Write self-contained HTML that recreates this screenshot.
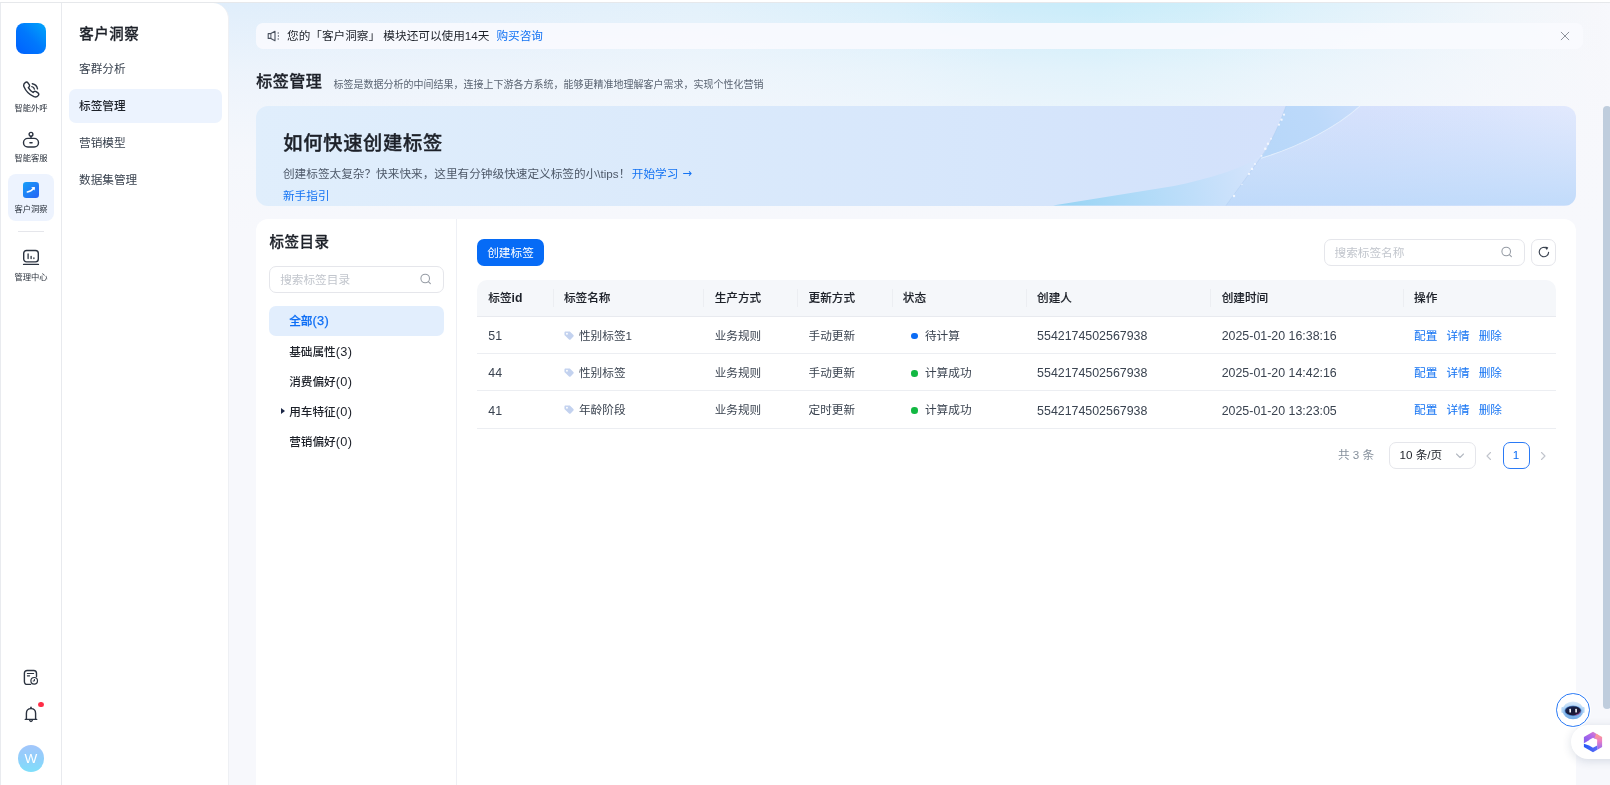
<!DOCTYPE html>
<html lang="zh-CN">
<head>
<meta charset="utf-8">
<title>标签管理</title>
<style>
*{box-sizing:border-box;margin:0;padding:0}
html,body{width:1610px;height:785px;overflow:hidden;background:#fff}
body{font-family:"Liberation Sans","Noto Sans CJK SC",sans-serif;font-size:11.650px;color:#1d2129;position:relative;-webkit-font-smoothing:antialiased}
a{text-decoration:none;color:#1473f3}
.abs{position:absolute}
#topline{position:absolute;left:0;top:2px;width:1610px;height:1px;background:#e6e8eb}
#app{position:absolute;left:0;top:3px;width:1610px;height:782px;overflow:hidden;background:#f7f8fc;will-change:transform}
/* main background */
#mainbg{position:absolute;left:62px;top:0;width:1548px;height:782px;background:#f7f8fc;overflow:hidden}
#mainbg .g1{position:absolute;left:0;top:0;width:100%;height:230px;
 background:linear-gradient(90deg,#dcebfb 0%,#e0eefb 11%,#e1effb 28%,#e3f1fb 41%,#d8effb 54%,#cdecfa 60.600%,#c8ecfa 67%,#cfeefa 73.500%,#dcf1fb 80%,#e6f3fb 86.400%,#f0f6fb 93%,#f6f7fb 99%,#f7f8fc 100%)}
#mainbg .g2{position:absolute;left:0;top:0;width:100%;height:230px;
 background:linear-gradient(180deg,rgba(247,248,252,0) 0%,rgba(247,248,252,.55) 30%,rgba(247,248,252,.9) 65%,#f7f8fc 100%)}
/* icon rail */
#rail{position:absolute;left:0;top:0;width:62px;height:782px;background:#fff;box-shadow:inset 1px 0 0 #e9ebef,inset -1px 0 0 #e8eaee;z-index:3}
#logo{position:absolute;left:16px;top:20.300px;width:30px;height:30.500px;border-radius:8px;background:linear-gradient(45deg,#0060ff 0%,#0078fd 50%,#00a6fa 100%)}
.nav{position:absolute;left:0;width:62px;text-align:center}
.lbl{position:absolute;left:0;width:62px;text-align:center;font-size:8.300px;line-height:10px;color:#2b323d;white-space:nowrap}
.nav svg{position:absolute}
#navact{position:absolute;left:7.700px;top:171.300px;width:46.800px;height:47.200px;border-radius:8px;background:#edf3fe}
#raildiv{position:absolute;left:18.300px;top:228px;width:26px;height:1px;background:#e5e6eb}
/* sub menu */
#menu{position:absolute;left:62px;top:0;width:167px;height:782px;background:#fff;border-top-right-radius:16px;border-right:1px solid #eef0f4;z-index:2}
#menu h2{position:absolute;left:17.300px;top:20.300px;letter-spacing:.500px;font-size:14.500px;line-height:22px;font-weight:500;-webkit-text-stroke:.260px #1d2129;color:#1d2129;white-space:nowrap}
.mi{position:absolute;left:7px;width:152.500px;height:33.500px;border-radius:7px;padding-left:10px;font-size:11.650px;line-height:33px;color:#39424f;white-space:nowrap}
.mi.on{background:#ecf3fe;color:#1d2129;font-weight:500}
/* notice */
#notice{position:absolute;left:256px;top:19.600px;width:1326.500px;height:26.800px;border-radius:7px;background:rgba(249,250,254,.92);z-index:1}
#notice .t{position:absolute;left:31px;top:-.600px;line-height:27px;font-size:11.650px;color:#1d2129;white-space:nowrap}
#notice .t a{margin-left:7px}
/* title */
#ptitle{position:absolute;left:256.200px;top:67px;letter-spacing:.500px;font-size:16px;line-height:24px;font-weight:500;-webkit-text-stroke:.320px #1d2129;color:#1d2129;white-space:nowrap;z-index:1}
#psub{position:absolute;left:333.400px;top:74.500px;font-size:10px;line-height:14px;color:#5b6573;white-space:nowrap;z-index:1}
/* banner */
#banner{position:absolute;left:255.700px;top:103.400px;width:1320.300px;height:99.300px;border-radius:12px;overflow:hidden;z-index:1;
 background:linear-gradient(90deg,#e0eefc 0%,#dbeafb 30%,#d6e6fb 55%,#d3e2fb 72%,#d6e1fc 84%,#dbe5fd 93%,#e2e9fd 100%)}
#banner h3{position:absolute;left:27.500px;top:23.600px;letter-spacing:.700px;font-size:19.300px;line-height:28px;font-weight:500;-webkit-text-stroke:.380px #1d2129;color:#1d2129;white-space:nowrap}
#banner p{position:absolute;left:27.300px;font-size:11.650px;line-height:18px;color:#4e5969;white-space:nowrap}
/* card */
#card{position:absolute;left:256px;top:216px;width:1320px;height:600px;border-radius:12px 12px 0 0;background:#fff;z-index:1}
#cardL{position:absolute;left:0;top:0;width:201px;height:600px;border-right:1px solid #eef0f5}
#cardL h4{position:absolute;left:13.400px;top:12.400px;letter-spacing:.500px;font-size:14.500px;line-height:22px;font-weight:500;-webkit-text-stroke:.260px #1d2129;color:#1d2129;white-space:nowrap}
.inp{position:absolute;height:26.500px;border:1px solid #e5e6eb;border-radius:7px;background:#fff;font-size:11.650px;line-height:26px;color:#c2c6cd;padding-left:10px;white-space:nowrap}
.ti{position:absolute;left:13.200px;width:174.700px;height:30.200px;border-radius:7px;font-size:11.650px;line-height:30px;padding-left:20px;color:#1d2129;font-weight:500;white-space:nowrap}
.ti.on{background:#e2eefd;color:#0f6ff5;font-weight:500;-webkit-text-stroke:.250px #0f6ff5}
.n{font-size:12.800px;letter-spacing:.350px}
#btn{position:absolute;left:221px;top:20px;width:67px;height:27px;border-radius:7px;background:#066bf6;color:#fff;font-size:11.650px;line-height:27px;text-align:center;white-space:nowrap}
#refresh{position:absolute;left:1275.200px;top:20px;width:25px;height:26.500px;border:1px solid #e5e6eb;border-radius:7px;background:#fff}
/* table */
#tbl{position:absolute;left:221px;top:60.500px;width:1079px}
#thead{position:relative;height:37px;background:#f5f7fa;border-radius:10px 10px 0 0;border-bottom:1px solid #e8eaef}
.tr{position:relative;height:37.400px;border-bottom:1px solid #eceef2}
.c{position:absolute;top:0;height:100%;line-height:37px;font-size:11.650px;color:#3a4350;white-space:nowrap;padding-left:11.300px}
#thead .c{font-weight:500;-webkit-text-stroke:.120px #1d2129;color:#1d2129;line-height:36.400px}
#thead .c + .c::before{content:"";position:absolute;left:0;top:9px;width:1px;height:18px;background:#eceef2}
.c1{left:0;width:75px}.c2{left:75.600px;width:151px}.c3{left:226.400px;width:94px}.c4{left:320.300px;width:94px}
.c5{left:414.500px;width:135px}.c6{left:548.800px;width:184px}.c7{left:733.400px;width:192px}.c8{left:925.800px;width:153px}
.tr .c{line-height:38.400px}
.tr .num{font-size:12.400px;top:.600px}
.dot{display:inline-block;width:6.600px;height:6.600px;border-radius:50%;margin:0 7.300px 1px 8.300px;vertical-align:middle}
.c8 a{margin-right:9px}
.tag{display:inline-block;vertical-align:middle;margin:-2px 4.400px 0 .300px}
/* pagination */
#pg{position:absolute;left:0;top:0;font-size:11.650px}
</style>
</head>
<body>
<div id="topline"></div>
<div id="app">
 <div id="mainbg"><div class="g1"></div><div class="g2"></div></div>

 <div id="rail">
  <div id="logo"></div>

  <!-- phone -->
  <svg class="abs" style="left:22px;top:77.5px" width="18" height="18" viewBox="0 0 18 18" fill="none" stroke="#2b3340" stroke-width="1.4" stroke-linecap="round" stroke-linejoin="round">
   <path d="M3.2 1.6c.9-.7 2-.7 2.7.2l1.300 1.900c.5.800.4 1.700-.2 2.300l-.7.700c1.200 2.100 2.700 3.600 4.800 4.800l.7-.7c.6-.6 1.500-.7 2.300-.2l1.900 1.300c.900.700.900 1.800.200 2.700-1.000 1.300-2.700 1.700-4.300 1.000-4.600-2.000-8.000-5.400-9.900-9.900-.6-1.500-.1-3.200 1.200-4.100z"/>
   <path d="M9.800 5.600c1.300.2 2.300 1.200 2.600 2.500"/><path d="M10.300 2.700c2.700.4 4.700 2.400 5.200 5.100"/>
  </svg>
  <div class="lbl abs" style="top:99.500px">智能外呼</div>
  <!-- robot -->
  <svg class="abs" style="left:22px;top:128px" width="18" height="18" viewBox="0 0 18 18" fill="none" stroke="#2b3340" stroke-width="1.400" stroke-linecap="round" stroke-linejoin="round">
   <circle cx="9" cy="3.300" r="1.900"/><path d="M9 5.200v2.200"/><rect x="1.500" y="7.400" width="15" height="8.600" rx="4.300"/><path d="M8 11.800h2" stroke-width="1.600"/>
  </svg>
  <div class="lbl abs" style="top:150px">智能客服</div>
  <!-- active -->
  <div id="navact"></div>
  <svg class="abs" style="left:23px;top:179px" width="16" height="16" viewBox="0 0 16 16">
   <defs><linearGradient id="ga" x1="0" y1="0" x2="1" y2="1"><stop offset="0" stop-color="#169ff8"/><stop offset="1" stop-color="#2962f5"/></linearGradient></defs>
   <rect width="16" height="16" rx="3.200" fill="url(#ga)"/>
   <path d="M4.300 10c2.600-.3 4.800-1.700 6.600-4" fill="none" stroke="#fff" stroke-width="1.500" stroke-linecap="round"/>
   <path d="M8.200 5.200l3.700-.3-.3 3.700z" fill="#fff"/>
  </svg>
  <div class="lbl abs" style="top:200.500px">客户洞察</div>
  <div id="raildiv"></div>
  <!-- monitor -->
  <svg class="abs" style="left:22px;top:246px" width="18" height="18" viewBox="0 0 18 18" fill="none" stroke="#2b3340" stroke-width="1.400" stroke-linecap="round" stroke-linejoin="round">
   <rect x="1.700" y="1.500" width="14.600" height="11.400" rx="2.800"/><path d="M1.600 15.400h14.800"/><path d="M6.100 5v4.600M9.100 7.300v2.300M11.900 8.800v.8" stroke-width="1.300"/>
  </svg>
  <div class="lbl abs" style="top:268.500px">管理中心</div>
  <!-- doc clock -->
  <svg class="abs" style="left:22px;top:665px" width="18" height="18" viewBox="0 0 18 18" fill="none" stroke="#2b3340" stroke-width="1.400" stroke-linecap="round" stroke-linejoin="round">
   <path d="M8.600 16.400H5.200c-1.700 0-2.800-1.100-2.800-2.800V5.300c0-1.700 1.100-2.800 2.800-2.800h6.500c1.700 0 2.800 1.100 2.800 2.800v3.300"/>
   <path d="M5.400 5.500h6.200M5.400 7.800h2.200" stroke-width="1.200"/>
   <circle cx="12.200" cy="12.800" r="3.300" stroke-width="1.200"/><path d="M12.400 11.400v1.600h-1.200" stroke-width="1"/>
  </svg>
  <!-- bell -->
  <svg class="abs" style="left:22px;top:702px" width="18" height="18" viewBox="0 0 18 18" fill="none" stroke="#2b3340" stroke-width="1.400" stroke-linecap="round" stroke-linejoin="round">
   <path d="M9 2.200v1.200"/><path d="M4.400 14.300V8.400c0-2.800 1.900-4.800 4.600-4.800s4.600 2 4.600 4.800v5.900"/><path d="M3.300 14.400h11.400"/><path d="M7.600 15.200c.2.900.700 1.300 1.400 1.300s1.200-.4 1.400-1.300" stroke-width="1.300"/>
  </svg>
  <div class="abs" style="left:38.300px;top:698.600px;width:5.600px;height:5.800px;border-radius:50%;background:#ff2d46"></div>
  <!-- avatar -->
  <div class="abs" style="left:17.600px;top:742px;width:26.800px;height:26.800px;border-radius:50%;background:linear-gradient(180deg,#a3c6fb 0%,#8fd0fb 55%,#7fdffa 100%);color:#fff;font-size:13.500px;line-height:27px;text-align:center">W</div>
 </div>

 <div id="menu">
  <h2>客户洞察</h2>
  <div class="mi" style="top:49px">客群分析</div>
  <div class="mi on" style="top:86px">标签管理</div>
  <div class="mi" style="top:123px">营销模型</div>
  <div class="mi" style="top:160px">数据集管理</div>
 </div>

 <div id="notice">

  <svg class="abs" style="left:10.800px;top:7.500px" width="15" height="12" viewBox="0 0 15 12" fill="none" stroke="#4a525f" stroke-width="1.100" stroke-linejoin="round" stroke-linecap="round">
   <path d="M1.200 3.600h2.600l4.200-2.300v9.400L3.800 8.400H1.200z"/><path d="M3.900 3.700v4.600" stroke-width="1"/>
   <path d="M11.200 3v.1M11.400 6v.1M11.200 9v.1" stroke-width="1.300"/>
  </svg>
  <svg class="abs" style="left:1304.400px;top:8.400px" width="10" height="10" viewBox="0 0 10 10" fill="none" stroke="#8d929b" stroke-width="1" stroke-linecap="round"><path d="M1.200 1.200l7.600 7.600M8.800 1.200L1.200 8.800"/></svg>
  <div class="t">您的「客户洞察」 模块还可以使用14天<a>购买咨询</a></div>
 </div>

 <div id="ptitle">标签管理</div>
 <div id="psub">标签是数据分析的中间结果，连接上下游各方系统，能够更精准地理解客户需求，实现个性化营销</div>

 <div id="banner">

  <svg class="abs" style="left:0;top:0" width="1321" height="99.500" viewBox="0 0 1321 99" preserveAspectRatio="none">
   <defs>
    <linearGradient id="rb1" gradientUnits="userSpaceOnUse" x1="800" y1="99" x2="1005" y2="52"><stop offset="0" stop-color="#96d4f4"/><stop offset=".3" stop-color="#aad9f7"/><stop offset=".65" stop-color="#bfdefa"/><stop offset="1" stop-color="#d6e4fc"/></linearGradient>
    <linearGradient id="rb3" x1="0" y1="0" x2="0" y2="1"><stop offset="0" stop-color="#c2dbfa" stop-opacity="0"/><stop offset="1" stop-color="#bcd9fa" stop-opacity=".85"/></linearGradient>
    <linearGradient id="rb2" gradientUnits="userSpaceOnUse" x1="1010" y1="50" x2="1100" y2="0"><stop offset="0" stop-color="#b7d7f9"/><stop offset=".6" stop-color="#bcd9fa"/><stop offset="1" stop-color="#c8ddfb"/></linearGradient>
   </defs>
   <path d="M970 99L1005 51C1045 40 1082 20 1104 0L1321 0L1321 99Z" fill="url(#rb3)"/>
   <path d="M797 99L918 79.500C950 73.500 982 63 996 55C1001 52 1004 50 1005.500 48.500L970 99Z" fill="url(#rb1)"/>
   <path d="M1030 0L1104 0C1082 20 1045 40 1005 52C1014 38 1023 20 1030 0Z" fill="url(#rb2)"/>
   <path d="M1104 0C1082 20 1045 40 1005 52" stroke="#e6effd" stroke-width="1" fill="none" opacity=".9"/>
   <path d="M1030 0C1023 20 1014 38 1005 51L970 99" stroke="#9fc4ee" stroke-width=".600" fill="none" opacity=".55"/>
   <g fill="#f6f9ff" opacity=".92"><circle cx="1028.0" cy="8.6" r="1.1"/><circle cx="1025.5" cy="13.6" r="1.2"/><circle cx="1023.0" cy="18.6" r="1.1"/><circle cx="1015.0" cy="32.6" r="0.9"/><circle cx="1012.0" cy="37.6" r="1.2"/><circle cx="1009.3" cy="42.6" r="1.3"/><circle cx="1005.5" cy="49.6" r="0.9"/><circle cx="999.0" cy="57.6" r="1.0"/><circle cx="996.0" cy="62.6" r="1.2"/><circle cx="993.0" cy="67.6" r="1.1"/><circle cx="986.0" cy="78.0" r="0.6"/><circle cx="978.0" cy="89.6" r="1.2"/></g>
  </svg>
  <h3>如何快速创建标签</h3>
  <p style="top:58.500px">创建标签太复杂？快来快来，这里有分钟级快速定义标签的小\tips！<a style="margin-left:1.500px">开始学习 <span style="font-family:'DejaVu Sans',sans-serif;font-size:11.500px;position:relative;top:-1.300px;margin-left:1px">→</span></a></p>
  <p style="top:80.600px"><a>新手指引</a></p>
 </div>

 <div id="card">
  <div id="cardL">
   <h4>标签目录</h4>
   <div class="inp" style="left:13.200px;top:47px;width:175.200px">搜索标签目录</div>
   <svg class="abs" style="left:163.700px;top:53.600px" width="12" height="12" viewBox="0 0 12 12" fill="none" stroke="#959ba4" stroke-width="1.050" stroke-linecap="round"><circle cx="5.200" cy="5.500" r="4.300"/><path d="M8.400 8.700l2 2"/></svg>
   <div class="ti on" style="top:87.3px">全部<span class="n">(3)</span></div>
   <div class="ti" style="top:117.5px">基础属性<span class="n">(3)</span></div>
   <div class="ti" style="top:147.7px">消费偏好<span class="n">(0)</span></div>
   <div class="ti" style="top:177.9px"><i class="abs" style="left:12px;top:11.200px;border-left:4.500px solid #1b2747;border-top:3.600px solid transparent;border-bottom:3.600px solid transparent"></i>用车特征<span class="n">(0)</span></div>
   <div class="ti" style="top:208.1px">营销偏好<span class="n">(0)</span></div>
  </div>
  <div id="btn">创建标签</div>
  <div class="inp" style="left:1067.500px;top:20px;width:201.200px">搜索标签名称</div>
  <svg class="abs" style="left:1244.5px;top:27.3px" width="12" height="12" viewBox="0 0 12 12" fill="none" stroke="#959ba4" stroke-width="1.050" stroke-linecap="round"><circle cx="5.200" cy="5.500" r="4.300"/><path d="M8.400 8.700l2 2"/></svg>
  <div id="refresh"><svg class="abs" style="left:5.100px;top:5.300px" width="14" height="14" viewBox="0 0 14 14" fill="none" stroke="#3a4250" stroke-width="1.150" stroke-linecap="round"><path d="M11.600 7.400A4.700 4.700 0 1 1 9.600 3.200"/><path d="M8.400 1.600l2.900 1-1.600 2.600z" fill="#343c49" stroke="none"/></svg></div>

  <div id="pg">
   <span class="abs" style="left:1082px;top:223px;line-height:26px;color:#86909c;white-space:nowrap">共 3 条</span>
   <div class="abs" style="left:1132.500px;top:223px;width:87px;height:26.500px;border:1px solid #e5e6eb;border-radius:7px;background:#fff;color:#1d2129;line-height:24.500px;padding-left:10px;white-space:nowrap">10 条/页
    <svg class="abs" style="left:65px;top:8.500px" width="10" height="8" viewBox="0 0 10 8" fill="none" stroke="#b4b9c2" stroke-width="1.100" stroke-linecap="round" stroke-linejoin="round"><path d="M1.500 2l3.500 3.500L8.500 2"/></svg>
   </div>
   <svg class="abs" style="left:1228.500px;top:231.500px" width="8" height="10" viewBox="0 0 8 10" fill="none" stroke="#c0c4cc" stroke-width="1.100" stroke-linecap="round" stroke-linejoin="round"><path d="M5.500 1.500L2 5l3.500 3.500"/></svg>
   <div class="abs" style="left:1246.500px;top:223px;width:27px;height:26.500px;border:1px solid #2a7af6;border-radius:7px;color:#0b6cf5;line-height:24.500px;text-align:center">1</div>
   <svg class="abs" style="left:1283px;top:231.500px" width="8" height="10" viewBox="0 0 8 10" fill="none" stroke="#c0c4cc" stroke-width="1.100" stroke-linecap="round" stroke-linejoin="round"><path d="M2.500 1.500L6 5 2.500 8.500"/></svg>
  </div>
  <div id="tbl">
   <div id="thead">
    <div class="c c1">标签<span style="font-weight:700;font-size:12.200px;-webkit-text-stroke:0">id</span></div><div class="c c2">标签名称</div><div class="c c3">生产方式</div><div class="c c4">更新方式</div>
    <div class="c c5">状态</div><div class="c c6">创建人</div><div class="c c7">创建时间</div><div class="c c8">操作</div>
   </div>
   <div class="tr">
    <div class="c c1 num">51</div><div class="c c2"><svg class="tag" width="10.400" height="9.600" viewBox="0 0 12 11"><path d="M1.800.6h4.300c.5 0 .9.200 1.200.5l3.600 3.500c.5.500.5 1.300 0 1.800L7.600 9.700c-.5.500-1.300.5-1.800 0L1.100 5.200C.7 4.900.5 4.400.5 3.900V1.900C.5 1.200 1.100.6 1.800.6z" fill="#c3d2ef"/><circle cx="3.400" cy="3.200" r="1.100" fill="#fff"/></svg>性别标签1</div><div class="c c3">业务规则</div><div class="c c4">手动更新</div>
    <div class="c c5"><i class="dot" style="background:#0b6cf5"></i>待计算</div><div class="c c6 num">5542174502567938</div><div class="c c7 num">2025-01-20 16:38:16</div>
    <div class="c c8"><a>配置</a><a>详情</a><a>删除</a></div>
   </div>
   <div class="tr">
    <div class="c c1 num">44</div><div class="c c2"><svg class="tag" width="10.400" height="9.600" viewBox="0 0 12 11"><path d="M1.800.6h4.300c.5 0 .9.200 1.200.5l3.600 3.500c.5.500.5 1.300 0 1.800L7.600 9.700c-.5.500-1.300.5-1.800 0L1.100 5.200C.7 4.900.5 4.400.5 3.900V1.900C.5 1.200 1.100.6 1.800.6z" fill="#c3d2ef"/><circle cx="3.400" cy="3.200" r="1.100" fill="#fff"/></svg>性别标签</div><div class="c c3">业务规则</div><div class="c c4">手动更新</div>
    <div class="c c5"><i class="dot" style="background:#12b842"></i>计算成功</div><div class="c c6 num">5542174502567938</div><div class="c c7 num">2025-01-20 14:42:16</div>
    <div class="c c8"><a>配置</a><a>详情</a><a>删除</a></div>
   </div>
   <div class="tr">
    <div class="c c1 num">41</div><div class="c c2"><svg class="tag" width="10.400" height="9.600" viewBox="0 0 12 11"><path d="M1.800.6h4.300c.5 0 .9.200 1.200.5l3.600 3.500c.5.500.5 1.300 0 1.800L7.600 9.700c-.5.500-1.300.5-1.800 0L1.100 5.200C.7 4.900.5 4.400.5 3.900V1.900C.5 1.200 1.100.6 1.800.6z" fill="#c3d2ef"/><circle cx="3.400" cy="3.200" r="1.100" fill="#fff"/></svg>年龄阶段</div><div class="c c3">业务规则</div><div class="c c4">定时更新</div>
    <div class="c c5"><i class="dot" style="background:#12b842"></i>计算成功</div><div class="c c6 num">5542174502567938</div><div class="c c7 num">2025-01-20 13:23:05</div>
    <div class="c c8"><a>配置</a><a>详情</a><a>删除</a></div>
   </div>
  </div>
 </div>

 <!-- scrollbar -->
 <div class="abs" style="left:1603px;top:103px;width:8px;height:603px;border-radius:4px;background:#bfcddd;z-index:4"></div>
 <!-- pill -->
 <div class="abs" style="left:1571px;top:722px;width:60px;height:34px;border-radius:17px;background:#fff;box-shadow:0 2px 10px rgba(40,60,100,.16);z-index:5"></div>
 <svg class="abs" style="left:1582.500px;top:728px;z-index:6" width="20" height="22" viewBox="0 0 20 22">
  <defs>
   <linearGradient id="hx1" x1="0" y1="1" x2="1" y2="0"><stop offset="0" stop-color="#7a5cf2"/><stop offset=".6" stop-color="#b86ae6"/><stop offset="1" stop-color="#f08ab8"/></linearGradient>
   <linearGradient id="hx2" x1="0" y1="0" x2="0" y2="1"><stop offset="0" stop-color="#ffa08a"/><stop offset=".45" stop-color="#ec7fc4"/><stop offset="1" stop-color="#8b6af3"/></linearGradient>
   <linearGradient id="hx3" x1="0" y1="0" x2="1" y2="0"><stop offset="0" stop-color="#2358f7"/><stop offset="1" stop-color="#5d6cf5"/></linearGradient>
  </defs>
  <path d="M10 .8L.9 6v6.200l5.200-2.900V9l3.900-2.200 2.300 1.300 3.900-3.700z" fill="url(#hx1)"/>
  <path d="M13.400 2.700L19.100 6v10l-4.800 2.800-.200-5.700.100-4.400-2.900-1.700z" fill="url(#hx2)"/>
  <path d="M.9 12.800l5.200 1.700 3.900 2.300 4.200-2.400.100 4.400L10 21.200.9 16z" fill="url(#hx3)"/>
 </svg>
 <!-- bot -->
 <div class="abs" style="left:1555px;top:689px;width:36px;height:36px;border-radius:50%;background:#fff;z-index:6"></div>
 <div class="abs" style="left:1556.200px;top:690.200px;width:33.600px;height:33.600px;border-radius:50%;background:#fff;border:1.200px solid #2a7af6;z-index:7"></div>
 <svg class="abs" style="left:1561px;top:697px;z-index:8" width="24" height="20" viewBox="0 0 24 20">
  <defs>
   <linearGradient id="bh" x1="0" y1="0" x2="0" y2="1"><stop offset="0" stop-color="#dcecfb"/><stop offset=".45" stop-color="#a8cff4"/><stop offset="1" stop-color="#6ea9e6"/></linearGradient>
   <linearGradient id="bv" x1="0" y1="0" x2="1" y2="1"><stop offset="0" stop-color="#1d2f66"/><stop offset=".5" stop-color="#151936"/><stop offset="1" stop-color="#2a1b3e"/></linearGradient>
  </defs>
  <rect x=".4" y="7" width="2.200" height="6" rx="1.100" fill="#b5d8f6"/><rect x="21.400" y="7" width="2.200" height="6" rx="1.100" fill="#b5d8f6"/>
  <ellipse cx="12" cy="10.400" rx="10.400" ry="8.900" fill="url(#bh)"/>
  <ellipse cx="12" cy="10.800" rx="8.600" ry="5.400" fill="#3d7fd3" opacity=".75"/>
  <ellipse cx="12" cy="10.800" rx="7.800" ry="4.600" fill="url(#bv)"/>
  <path d="M14.500 15.100c2.300-.4 4.300-1.700 5-3.400" stroke="#e0489a" stroke-width=".700" fill="none" opacity=".85"/>
  <rect x="8.400" y="8.800" width="1.600" height="3.800" rx=".5" fill="#f4f5fb"/><rect x="14.300" y="8.800" width="1.600" height="3.800" rx=".5" fill="#f4f5fb"/>
 </svg>
</div>
</body>
</html>
